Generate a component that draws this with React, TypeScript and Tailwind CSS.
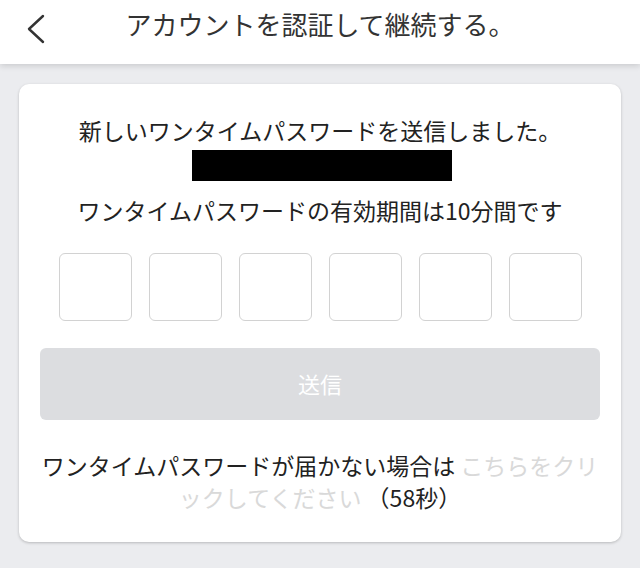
const FONT = { fontFamily: '"Noto Sans CJK JP", "Noto Sans", sans-serif' };

function BackIcon() {
	return (
		<svg width="22" height="30" viewBox="0 0 22 30" fill="none">
			<path d="M18 2 L4 15 L18 28" stroke="#333" strokeWidth="2.4" strokeLinecap="round" strokeLinejoin="round" />
		</svg>
	);
}

export default function App() {
	const boxes = [0, 1, 2, 3, 4, 5];
	return (
		<div className="w-[640px] h-[568px] overflow-hidden bg-[#ebecef] text-[#222]" style={FONT}>
			<header className="relative z-10 h-16 bg-white grid grid-cols-[64px_1fr_64px] items-center shadow-[0_2px_6px_rgba(0,0,0,0.14)]">
				<div className="flex items-center pl-[25px] pb-[6px]">
					<BackIcon />
				</div>
				<h1 className="text-center text-[26px] leading-8 pb-[16px] text-[#333]">アカウントを認証して継続する。</h1>
				<div />
			</header>

			<main className="mx-[19px] mt-5 bg-white rounded-[10px] px-[21px] pt-[30px] pb-[29px] shadow-[0_1px_3px_rgba(0,0,0,0.22)]">
				<p className="text-center text-[23px] leading-8">新しいワンタイムパスワードを送信しました。</p>
				<div className="ml-[152px] mt-1 w-[260px] h-[31px] bg-black" />
				<p className="mt-[13px] text-center text-[23px] leading-8">ワンタイムパスワードの有効期間は10分間です</p>

				<div className="mt-[27px] flex justify-center gap-[17px]">
					{boxes.map((i) => (
						<div key={i} className="w-[73px] h-[68px] rounded-[6px] border border-[#d2d2d2] bg-white" />
					))}
				</div>

				<button className="mt-[27px] w-full h-[72px] rounded-[6px] bg-[#dcdde0] text-white text-[22px] flex items-center justify-center pb-[2px]">
					送信
				</button>

				<p className="mt-[29px] text-center text-[23px] leading-8">
					ワンタイムパスワードが届かない場合は <span className="text-[#d9d9d9]">こちらをクリックしてください</span> （58秒）
				</p>
			</main>
		</div>
	);
}
